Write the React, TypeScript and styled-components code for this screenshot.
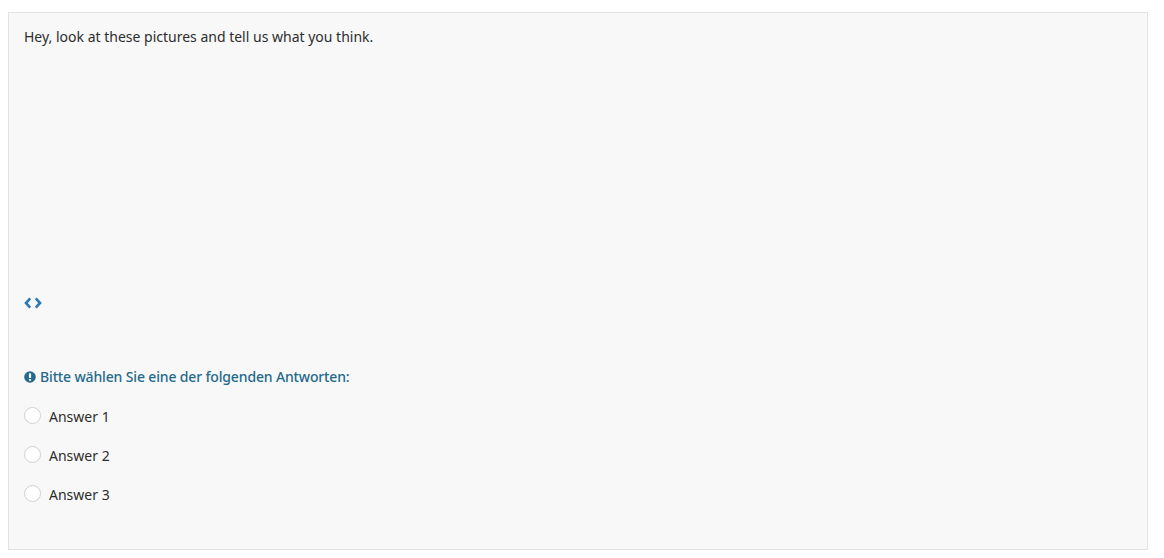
import React from 'react';
import styled, { createGlobalStyle } from 'styled-components';

const answers = ['Answer 1', 'Answer 2', 'Answer 3'];

const App: React.FC = () => {
  return (
    <>
      <GlobalStyle />
      <Page>
        <Question>
          <Prompt>Hey, look at these pictures and tell us what you think.</Prompt>
          <Carousel>
            <Arrows>
              <ArrowIcon viewBox="0 0 8 12">
                <path d="M6.2 1.4 2 6l4.2 4.6" />
              </ArrowIcon>
              <ArrowIcon viewBox="0 0 8 12">
                <path d="M1.8 1.4 6 6l-4.2 4.6" />
              </ArrowIcon>
            </Arrows>
          </Carousel>
          <Hint>
            <HintIcon viewBox="0 0 12 12">
              <circle cx="6" cy="6" r="5.8" fill="#246a8a" />
              <rect x="4.9" y="2.3" width="2.2" height="4.8" rx="0.6" fill="#f8f8f8" />
              <rect x="4.9" y="7.9" width="2.2" height="1.9" rx="0.5" fill="#f8f8f8" />
            </HintIcon>
            <HintText>Bitte wählen Sie eine der folgenden Antworten:</HintText>
          </Hint>
          <AnswerList>
            {answers.map((answer) => (
              <AnswerRow key={answer}>
                <Radio />
                <AnswerLabel>{answer}</AnswerLabel>
              </AnswerRow>
            ))}
          </AnswerList>
        </Question>
      </Page>
    </>
  );
};

const GlobalStyle = createGlobalStyle`
  html, body {
    margin: 0;
    padding: 0;
    background: #ffffff;
  }
  body {
    font-family: 'Noto Sans', 'Open Sans', sans-serif;
    font-size: 14px;
    color: #2d2d2d;
  }
`;

const Page = styled.div`
  padding: 12px 16px 8px 8px;
  height: 558px;
  box-sizing: border-box;
`;

const Question = styled.div`
  height: 538px;
  box-sizing: border-box;
  padding: 14px 15px 0;
  background: #f8f8f8;
  border: 1px solid #e3e3e3;
`;

const Prompt = styled.div`
  line-height: 20px;
`;

const Carousel = styled.div`
  height: 262px;
  display: flex;
  align-items: flex-end;
`;

const Arrows = styled.div`
  display: flex;
  gap: 2px;
`;

const ArrowIcon = styled.svg`
  width: 8px;
  height: 12px;
  fill: none;
  stroke: #2a78b5;
  stroke-width: 2.6;
`;

const Hint = styled.div`
  margin-top: 58px;
  display: flex;
  align-items: center;
  gap: 4px;
  line-height: 20px;
  color: #246a8a;
`;

const HintIcon = styled.svg`
  width: 12px;
  height: 12px;
  flex-shrink: 0;
`;

const HintText = styled.span`
  font-weight: 500;
  letter-spacing: -0.15px;
`;

const AnswerList = styled.div`
  margin-top: 20px;
  display: flex;
  flex-direction: column;
  gap: 19px;
`;

const AnswerRow = styled.div`
  display: flex;
  align-items: center;
  height: 20px;
`;

const Radio = styled.span`
  width: 15px;
  height: 15px;
  margin-top: -3px;
  margin-right: 8px;
  border: 1px solid #cfcfcf;
  border-radius: 50%;
  background: #ffffff;
`;

const AnswerLabel = styled.span`
  line-height: 20px;
`;

export default App;
